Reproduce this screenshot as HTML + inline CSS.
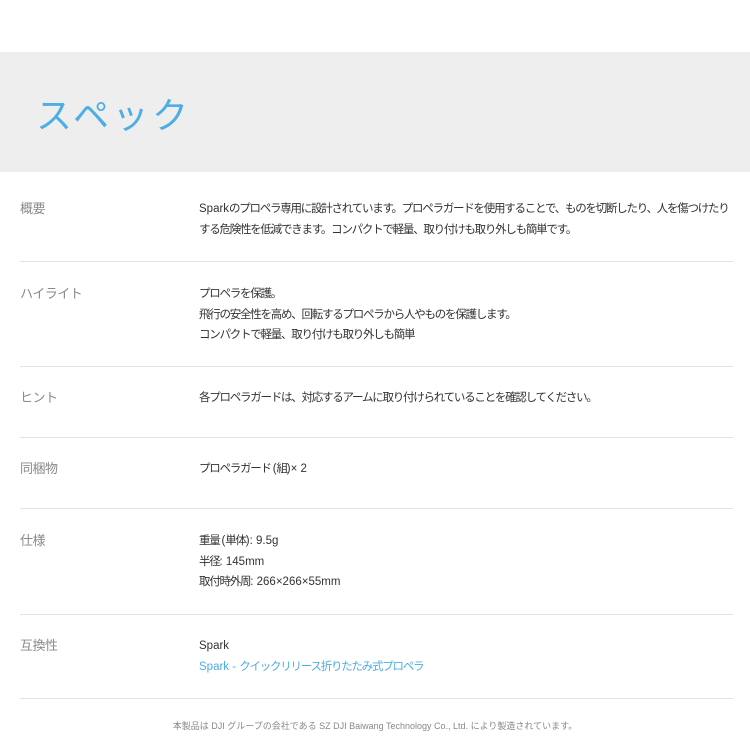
<!DOCTYPE html>
<html><head><meta charset="utf-8"><style>
body{margin:0;width:750px;height:750px;background:#fff;font-family:"Liberation Sans","Noto Sans CJK JP",sans-serif;position:relative;overflow:hidden}
.band{position:absolute;left:0;top:52px;width:750px;height:120px;background:#eeeeee}
.title{position:absolute;left:36px;top:92px;font-size:36px;color:#4eaee3;letter-spacing:3.5px;line-height:48px}
.l{position:absolute;left:20px;font-size:13px;color:#8a8a8a;line-height:20px;letter-spacing:-0.5px}
.c{position:absolute;left:199px;font-size:11.5px;color:#333;line-height:20.5px;white-space:nowrap;letter-spacing:-1.25px}
.c span.lat,.lat{letter-spacing:0}
.hr{position:absolute;left:20px;width:713px;height:1px;background:#e2e2e2}
.a{color:#4eaee3}
.f{position:absolute;left:0;width:750px;text-align:center;top:719px;font-size:9px;color:#888}
</style></head><body>
<div class="band"></div>
<div class="title">スペック</div>

<div class="l" style="top:199px">概要</div>
<div class="c" style="top:199px"><span class="lat">Spark</span>のプロペラ専用に設計されています。プロペラガードを使用することで、ものを切断したり、人を傷つけたり<br>する危険性を低減できます。コンパクトで軽量、取り付けも取り外しも簡単です。</div>
<div class="hr" style="top:261px"></div>

<div class="l" style="top:284px">ハイライト</div>
<div class="c" style="top:284px">プロペラを保護。<br>飛行の安全性を高め、回転するプロペラから人やものを保護します。<br>コンパクトで軽量、取り付けも取り外しも簡単</div>
<div class="hr" style="top:366px"></div>

<div class="l" style="top:388px">ヒント</div>
<div class="c" style="top:388px">各プロペラガードは、対応するアームに取り付けられていることを確認してください。</div>
<div class="hr" style="top:437px"></div>

<div class="l" style="top:459px">同梱物</div>
<div class="c" style="top:459px">プロペラガード <span class="lat">(</span>組<span class="lat">)× 2</span></div>
<div class="hr" style="top:508px"></div>

<div class="l" style="top:531px">仕様</div>
<div class="c" style="top:531px">重量 <span class="lat">(</span>単体<span class="lat">): 9.5g</span><br>半径<span class="lat">: 145mm</span><br>取付時外周<span class="lat">: 266×266×55mm</span></div>
<div class="hr" style="top:614px"></div>

<div class="l" style="top:636px">互換性</div>
<div class="c" style="top:636px"><span class="lat">Spark</span><br><span class="a"><span class="lat">Spark - </span>クイックリリース折りたたみ式プロペラ</span></div>
<div class="hr" style="top:698px"></div>

<div class="f">本製品は DJI グループの会社である SZ DJI Baiwang Technology Co., Ltd. により製造されています。</div>
</body></html>
